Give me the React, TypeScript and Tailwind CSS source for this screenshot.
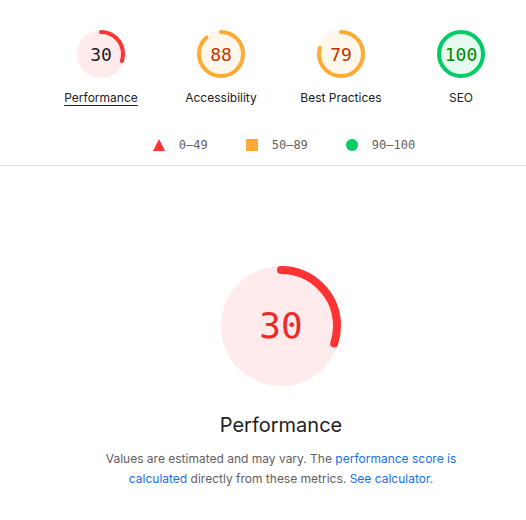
import React from "react";

type GaugeProps = {
  score: number;
  size: number;
  stroke: number;
  arc: string;
  bg: string;
  textClass: string;
};

function Gauge({ score, size, stroke, arc, bg, textClass }: GaugeProps) {
  const r = 60 - stroke / 2;
  const c = 2 * Math.PI * r;
  const len = (score / 100) * c;
  return (
    <div className="relative" style={{ width: size, height: size }}>
      <svg viewBox="0 0 120 120" width={size} height={size} className="block">
        <circle cx="60" cy="60" r="60" fill={bg} />
        <circle
          cx="60"
          cy="60"
          r={r}
          fill="none"
          stroke={arc}
          strokeWidth={stroke}
          strokeLinecap={score >= 100 ? "butt" : "round"}
          strokeDasharray={`${len} ${c}`}
          transform="rotate(-90 60 60)"
        />
      </svg>
      <div
        className={`absolute inset-0 flex items-center justify-center ${textClass}`}
        style={{ fontFamily: '"DejaVu Sans Mono", monospace' }}
      >
        {score}
      </div>
    </div>
  );
}

const cats = [
  { score: 30, label: "Performance", arc: "#ff3333", bg: "#ffebeb", text: "text-[#212121]", underline: true },
  { score: 88, label: "Accessibility", arc: "#ffaa33", bg: "#fff7eb", text: "text-[#c33300]", underline: false },
  { score: 79, label: "Best Practices", arc: "#ffaa33", bg: "#fff7eb", text: "text-[#c33300]", underline: false },
  { score: 100, label: "SEO", arc: "#00cc66", bg: "#e6faf0", text: "text-[#008800]", underline: false },
];

export default function App() {
  return (
    <div
      className="w-[526px] h-[520px] bg-white overflow-hidden text-[#212121]"
      style={{ fontFamily: 'Inter, "Liberation Sans", sans-serif' }}
    >
      <div className="pl-[36px] pt-[30px]">
        <div className="flex justify-center">
          {cats.map((c) => (
            <div key={c.label} className="w-[120px] flex flex-col items-center">
              <Gauge score={c.score} size={48} stroke={10} arc={c.arc} bg={c.bg} textClass={`text-[18px] ${c.text}`} />
              <div
                className={`mt-[10px] text-[12px] leading-[20px] text-[#212121] ${c.underline ? "underline underline-offset-[3px]" : ""}`}
              >
                {c.label}
              </div>
            </div>
          ))}
        </div>
        <div
          className="mt-[27px] pl-[6px] flex justify-center items-center gap-[38px] text-[12px] leading-[20px] text-[#616161]"
          style={{ fontFamily: '"DejaVu Sans Mono", monospace' }}
        >
          <div className="flex items-center gap-[14px]">
            <svg width="12" height="12" viewBox="0 0 12 12">
              <polygon points="6,0 12,12 0,12" fill="#ff3333" />
            </svg>
            <span>0–49</span>
          </div>
          <div className="flex items-center gap-[14px]">
            <div className="w-[12px] h-[12px] bg-[#ffaa33]" />
            <span>50–89</span>
          </div>
          <div className="flex items-center gap-[14px]">
            <div className="w-[12px] h-[12px] rounded-full bg-[#00cc66]" />
            <span>90–100</span>
          </div>
        </div>
      </div>
      <div className="mt-[10px] h-px bg-[#e0e0e0]" />
      <div className="pl-[36px] flex flex-col items-center">
        <div className="mt-[100px]">
          <Gauge score={30} size={120} stroke={8} arc="#ff3333" bg="#ffebeb" textClass="text-[36px] text-[#eb2a2a]" />
        </div>
        <div className="mt-[27px] text-[20px] leading-[24px] text-[#212121]">Performance</div>
        <p className="mt-[12px] max-w-[360px] text-center text-[12px] leading-[20px] text-[#616161]">
          Values are estimated and may vary. The{" "}
          <span className="text-[#1a6fe8]">performance score is calculated</span> directly from these metrics.{" "}
          <span className="text-[#1a6fe8]">See calculator.</span>
        </p>
      </div>
    </div>
  );
}
